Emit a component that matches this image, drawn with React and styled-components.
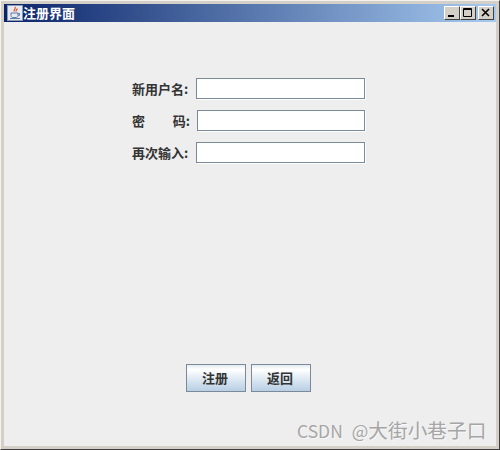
import styled, { createGlobalStyle } from 'styled-components';

const cjk = '"Noto Sans CJK SC", "Liberation Sans", sans-serif';

const GlobalStyle = createGlobalStyle`
  html, body { margin: 0; padding: 0; background: #d4d0c8; }
  #root { width: 500px; height: 450px; }
`;

const Frame = styled.div`
  position: relative;
  box-sizing: border-box;
  width: 500px;
  height: 450px;
  background: #d4d0c8;
  border-style: solid;
  border-width: 1px;
  border-color: #f4f2ee #404040 #404040 #f4f2ee;
  padding: 3px;
  display: flex;
  flex-direction: column;
`;

const TitleBar = styled.div`
  height: 18px;
  flex: none;
  display: flex;
  align-items: center;
  padding: 0 2px 0 3px;
  background: linear-gradient(90deg, #0a246a 0%, #a6caf0 100%);
`;

const TitleIcon = styled.svg`
  width: 16px;
  height: 16px;
  flex: none;
`;

const TitleText = styled.span`
  font: bold 13px/18px ${cjk};
  color: #fff;
  flex: 1;
`;

const WinButton = styled.button`
  width: 16px;
  height: 14px;
  padding: 0;
  margin-left: ${({ $gap }) => $gap}px;
  background: #d4d0c8;
  border-style: solid;
  border-width: 1px;
  border-color: #fff #404040 #404040 #fff;
  display: flex;
  align-items: center;
  justify-content: center;
`;

const Body = styled.div`
  flex: 1;
  background: #eeeeee;
  display: flex;
  flex-direction: column;
  align-items: flex-start;
  padding: 56px 0 0;
`;

const Form = styled.div`
  display: flex;
  flex-direction: column;
  gap: 10px;
`;

const Row = styled.div`
  display: flex;
  align-items: flex-start;
  height: ${({ $h }) => $h}px;
`;

const Label = styled.label`
  box-sizing: border-box;
  width: ${({ $w }) => $w}px;
  padding-left: 128px;
  font: bold 13px/21px ${cjk};
  color: #333333;
  white-space: nowrap;
`;

const Spread = styled.span`
  display: flex;
  justify-content: space-between;
  width: 58px;
`;

const Field = styled.input`
  box-sizing: border-box;
  display: block;
  width: ${({ $w }) => $w}px;
  height: ${({ $h }) => $h}px;
  margin: 0;
  padding: 0 3px;
  background: #fff;
  border: 1px solid #7a8a99;
  box-shadow: 1px 1px 0 #fff;
  outline: none;
`;

const Actions = styled.div`
  display: flex;
  gap: 5px;
  margin: 201px 0 0 182px;
`;

const ActionButton = styled.button`
  box-sizing: border-box;
  width: 60px;
  height: 28px;
  padding: 0 2px 0 0;
  font: bold 13px/16px ${cjk};
  color: #333333;
  border: 1px solid #7a8a99;
  background: linear-gradient(180deg, #e4ebf3 0%, #ffffff 18%, #dde8f2 55%, #b8cfe5 100%);
`;

const Watermark = styled.div`
  position: absolute;
  left: 296px;
  top: 417px;
  font: 17.5px/24px ${cjk};
  word-spacing: 5px;
  color: #a6a6a6;
  text-shadow: 1px 1px 0 rgba(255, 255, 255, 0.6);
  white-space: nowrap;
`;

const WatermarkName = styled.span`
  font-size: 19.7px;
`;

export default function App() {
  return (
    <>
      <GlobalStyle />
      <Frame>
        <TitleBar>
          <TitleIcon viewBox="0 0 16 16">
            <rect x="0.5" y="0.5" width="15" height="15" fill="#e8e8ee" stroke="#8a9ab5" />
            <path d="M8 2c1.5 1.5-2 2.5-.6 4.4M10 3.5c.6 1-1.6 1.6-.8 3" fill="none" stroke="#d8502a" strokeWidth="1.2" />
            <path d="M4 8h7v2.5c0 1.4-1 2-2 2H6c-1 0-2-.6-2-2zM11 8.5h1.5v1.8H11M3 13.5h10" fill="none" stroke="#5b7fa8" strokeWidth="1" />
          </TitleIcon>
          <TitleText>注册界面</TitleText>
          <WinButton $gap={0} aria-label="最小化">
            <svg width="10" height="10" viewBox="0 0 10 10"><rect x="1" y="7" width="6" height="2" fill="#000" /></svg>
          </WinButton>
          <WinButton $gap={0} aria-label="最大化">
            <svg width="10" height="10" viewBox="0 0 10 10"><path d="M0.5 0.5h8v8h-8zM0.5 1.5h8" fill="none" stroke="#000" /></svg>
          </WinButton>
          <WinButton $gap={2} aria-label="关闭">
            <svg width="10" height="10" viewBox="0 0 10 10"><path d="M1 1l7 7M8 1l-7 7" fill="none" stroke="#000" strokeWidth="1.6" /></svg>
          </WinButton>
        </TitleBar>
        <Body>
          <Form>
            <Row $h={22}>
              <Label $w={192}>新用户名:</Label>
              <Field $w={169} $h={21} />
            </Row>
            <Row $h={22}>
              <Label $w={193}><Spread><span>密</span><span>码:</span></Spread></Label>
              <Field $w={168} $h={21} />
            </Row>
            <Row $h={21}>
              <Label $w={192}>再次输入:</Label>
              <Field $w={169} $h={21} />
            </Row>
          </Form>
          <Actions>
            <ActionButton>注册</ActionButton>
            <ActionButton>返回</ActionButton>
          </Actions>
        </Body>
        <Watermark>CSDN @<WatermarkName>大街小巷子口</WatermarkName></Watermark>
      </Frame>
    </>
  );
}
